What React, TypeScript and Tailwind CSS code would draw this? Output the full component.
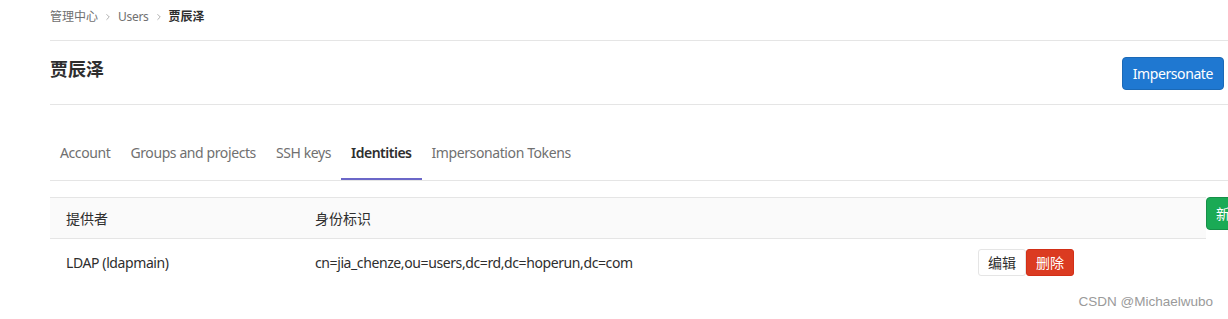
import { ChevronRight } from "lucide-react";

const tabs = ["Account", "Groups and projects", "SSH keys", "Identities", "Impersonation Tokens"];

export default function App() {
  return (
    <div className="relative w-[1228px] h-[319px] overflow-hidden bg-white text-[#2e2e2e] font-['Noto_Sans','Noto_Sans_CJK_SC',sans-serif]">
      <div className="ml-[50px]">
        {/* 面包屑 */}
        <div className="h-[41px] flex items-center pb-[7px] border-b border-[#e5e5e5] text-[12px] text-[#707070]">
          <span>管理中心</span>
          <ChevronRight size={10} strokeWidth={2} className="mx-[5px] text-[#a0a0a0]" />
          <span className="tracking-[-0.3px]">Users</span>
          <ChevronRight size={10} strokeWidth={2} className="mx-[5px] text-[#a0a0a0]" />
          <span className="font-bold text-[#2e2e2e]">贾辰泽</span>
        </div>

        {/* 标题 */}
        <div className="flex items-start justify-between pt-[16px] pb-[14px] pr-[4px] border-b border-[#e5e5e5]">
          <h1 className="h-[24px] leading-[24px] text-[18px] font-bold">贾辰泽</h1>
          <button className="h-[33px] px-[10px] rounded-[4px] bg-[#1f78d1] border border-[#1b69b6] text-white text-[14px] tracking-[-0.4px]">
            Impersonate
          </button>
        </div>

        {/* Tabs */}
        <div className="mt-[21px] flex border-b border-[#e5e5e5] text-[14px] tracking-[-0.4px]">
          {tabs.map((t) => (
            <div
              key={t}
              className={`h-[54px] px-[10px] flex items-center border-b-2 ${
                t === "Identities"
                  ? "border-[#6b67c8] font-semibold tracking-[-0.5px] text-[#2e2e2e]"
                  : "border-transparent text-[#707070]"
              }`}
            >
              {t}
            </div>
          ))}
        </div>

        {/* 表格 */}
        <div className="mt-[16px] flex items-start text-[14px]">
          <div className="w-[1156px] shrink-0">
            <div className="h-[42px] flex items-center bg-[#fafafa] border-y border-[#e5e5e5]">
              <div className="w-[249px] px-4">提供者</div>
              <div className="w-[663px] px-4">身份标识</div>
              <div className="flex-1" />
            </div>
            <div className="h-[47px] flex items-center">
              <div className="w-[249px] px-4 tracking-[-0.4px]">LDAP (ldapmain)</div>
              <div className="w-[663px] px-4 tracking-[-0.4px]">cn=jia_chenze,ou=users,dc=rd,dc=hoperun,dc=com</div>
              <div className="flex-1 px-4 flex">
                <button className="h-[27px] w-[48px] rounded-[3px] bg-white border border-[#e5e5e5] text-[14px] text-[#2e2e2e]">
                  编辑
                </button>
                <button className="h-[27px] w-[48px] rounded-[3px] bg-[#db3b21] border border-[#d22f17] text-[14px] text-white">
                  删除
                </button>
              </div>
            </div>
          </div>
          <button className="shrink-0 h-[33px] w-[70px] pl-[9px] text-left rounded-[4px] bg-[#1aaa55] border border-[#168f48] text-white text-[14px] whitespace-nowrap">
            新建
          </button>
        </div>
      </div>

      {/* 水印 */}
      <div className="absolute right-[15px] top-[293px] text-[13.5px] leading-[18px] text-[#9a9a9a] font-['Liberation_Sans',sans-serif]">
        CSDN @Michaelwubo
      </div>
    </div>
  );
}
